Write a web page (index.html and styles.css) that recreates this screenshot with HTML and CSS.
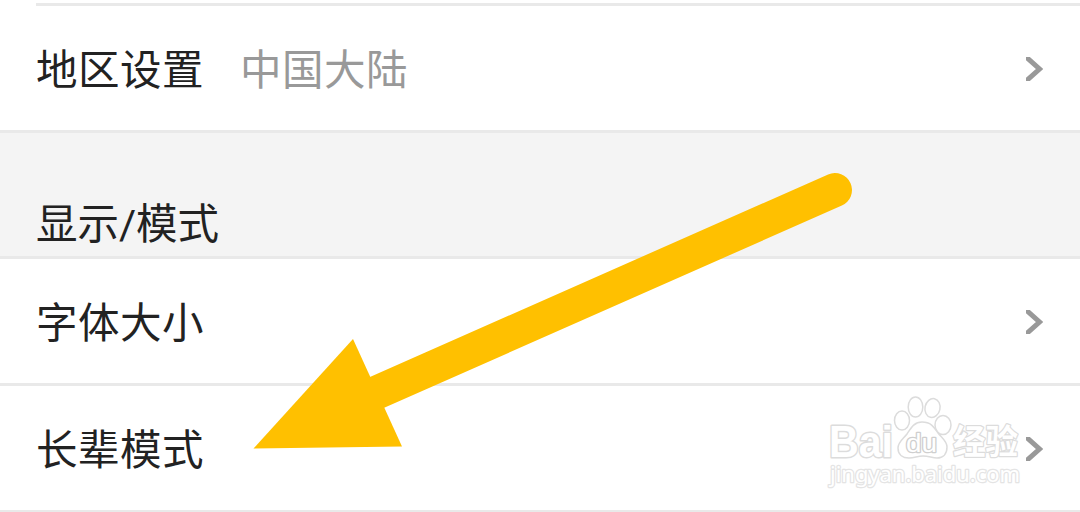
FILE: index.html
```html
<!DOCTYPE html>
<html lang="zh-CN">

<head>
    <meta charset="UTF-8">
    <meta name="viewport" content="width=device-width, initial-scale=1.0">
    <title>设置</title>
    <link rel="stylesheet" href="styles.css">
</head>

<body>
    <div class="settings">
        <div class="divider inset"></div>
        <div class="row">
            <span class="label">地区设置</span>
            <span class="value">中国大陆</span>
            <svg class="chevron" viewBox="0 0 17 24"><path d="M-1 -1L13.500 12L-1 25" /></svg>
        </div>
        <h2 class="section-title">显示/模式</h2>
        <div class="row">
            <span class="label">字体大小</span>
            <svg class="chevron" viewBox="0 0 17 24"><path d="M-1 -1L13.500 12L-1 25" /></svg>
        </div>
        <div class="row">
            <span class="label">长辈模式</span>
            <svg class="chevron" viewBox="0 0 17 24"><path d="M-1 -1L13.500 12L-1 25" /></svg>
        </div>
    </div>

    <svg class="arrow" viewBox="0 0 1080 512">
        <path class="arrow-line" d="M835 190L370 395.500" />
        <path class="arrow-head" d="M253.500 448.500L353 339L402 446.500Z" />
    </svg>

    <svg class="watermark" viewBox="820 390 210 105">
        <text class="brand" x="829" y="456.500" textLength="64" lengthAdjust="spacingAndGlyphs">Bai</text>
        <ellipse cx="902" cy="420.500" rx="7.500" ry="9.500" />
        <ellipse cx="915.500" cy="407" rx="7.300" ry="10" />
        <ellipse cx="932.500" cy="408" rx="7.500" ry="9.500" transform="rotate(12 932.500 408)" />
        <ellipse cx="943" cy="425" rx="8" ry="9.500" />
        <path d="M922 422C914 422 911 428 907 434C903 439 898 442 898 448C898 455 903 458 909 458C915 458 917 456 923 456C929 456 932 458 937 458C943 458 947 454 947 447C947 441 942 438 938 433C934 427 931 422 922 422Z" />
        <text class="du" x="906" y="451.500" textLength="31" lengthAdjust="spacingAndGlyphs">du</text>
        <text class="brand-cn" x="953" y="453.500" textLength="65" lengthAdjust="spacingAndGlyphs">经验</text>
        <text class="site" x="830" y="482" textLength="190" lengthAdjust="spacingAndGlyphs">jingyan.baidu.com</text>
    </svg>
</body>

</html>
```
FILE: styles.css
```css
* {
    box-sizing: border-box;
    margin: 0;
    padding: 0;
}

body {
    position: relative;
    height: 512px;
    overflow: hidden;
    background-color: #fff;
    color: #222;
    font-family: "Noto Sans CJK SC", sans-serif;
    font-size: 41.5px;
    letter-spacing: 0.5px;
}

.settings {
    padding-top: 3px;
}

.divider {
    height: 3px;
    background-color: #e9e9e9;
}

.divider.inset {
    margin-left: 36px;
}

.row {
    display: flex;
    align-items: center;
    height: 127px;
    padding: 2px 37px 0 36px;
    border-bottom: 3px solid #e9e9e9;
}

.label,
.value {
    padding-bottom: 4px;
    line-height: 60px;
}

.value {
    margin-left: 36px;
    color: #999;
}

.chevron {
    width: 17px;
    height: 24px;
    margin-left: auto;
    overflow: hidden;
}

.chevron path {
    fill: none;
    stroke: #999;
    stroke-width: 5;
}

.section-title {
    height: 126px;
    padding: 62px 36px 0;
    background-color: #f4f4f4;
    border-bottom: 3px solid #e9e9e9;
    font-family: Roboto, "Noto Sans CJK SC", sans-serif;
    font-size: 41.5px;
    font-weight: 400;
    letter-spacing: 0;
    line-height: 60px;
}

/* callout over the list */
.arrow {
    position: absolute;
    top: 0;
    left: 0;
    width: 1080px;
    height: 512px;
}

.arrow-line {
    fill: none;
    stroke: #ffc000;
    stroke-width: 34;
    stroke-linecap: round;
}

.arrow-head {
    fill: #ffc000;
}

.watermark {
    position: absolute;
    top: 390px;
    left: 820px;
    width: 210px;
    height: 105px;
    fill: #fff;
    stroke: #dcdcdc;
    stroke-width: 1.5;
    letter-spacing: 0;
}

.watermark text {
    font-family: "Liberation Sans", sans-serif;
    font-weight: 700;
    stroke-linejoin: round;
    paint-order: stroke;
}

.watermark .brand {
    font-size: 45px;
    stroke-width: 3;
}

.watermark .du {
    font-size: 25px;
    font-weight: 400;
    stroke: #cfcfcf;
    stroke-width: 2.5;
}

.watermark .brand-cn {
    font-family: "Noto Sans CJK SC", sans-serif;
    font-weight: 700;
    font-size: 34px;
    stroke-width: 2.5;
}

.watermark .site {
    font-family: "Noto Sans", sans-serif;
    font-weight: 400;
    font-size: 22px;
    stroke: #e4e4e4;
    stroke-width: 2.5;
}
```
